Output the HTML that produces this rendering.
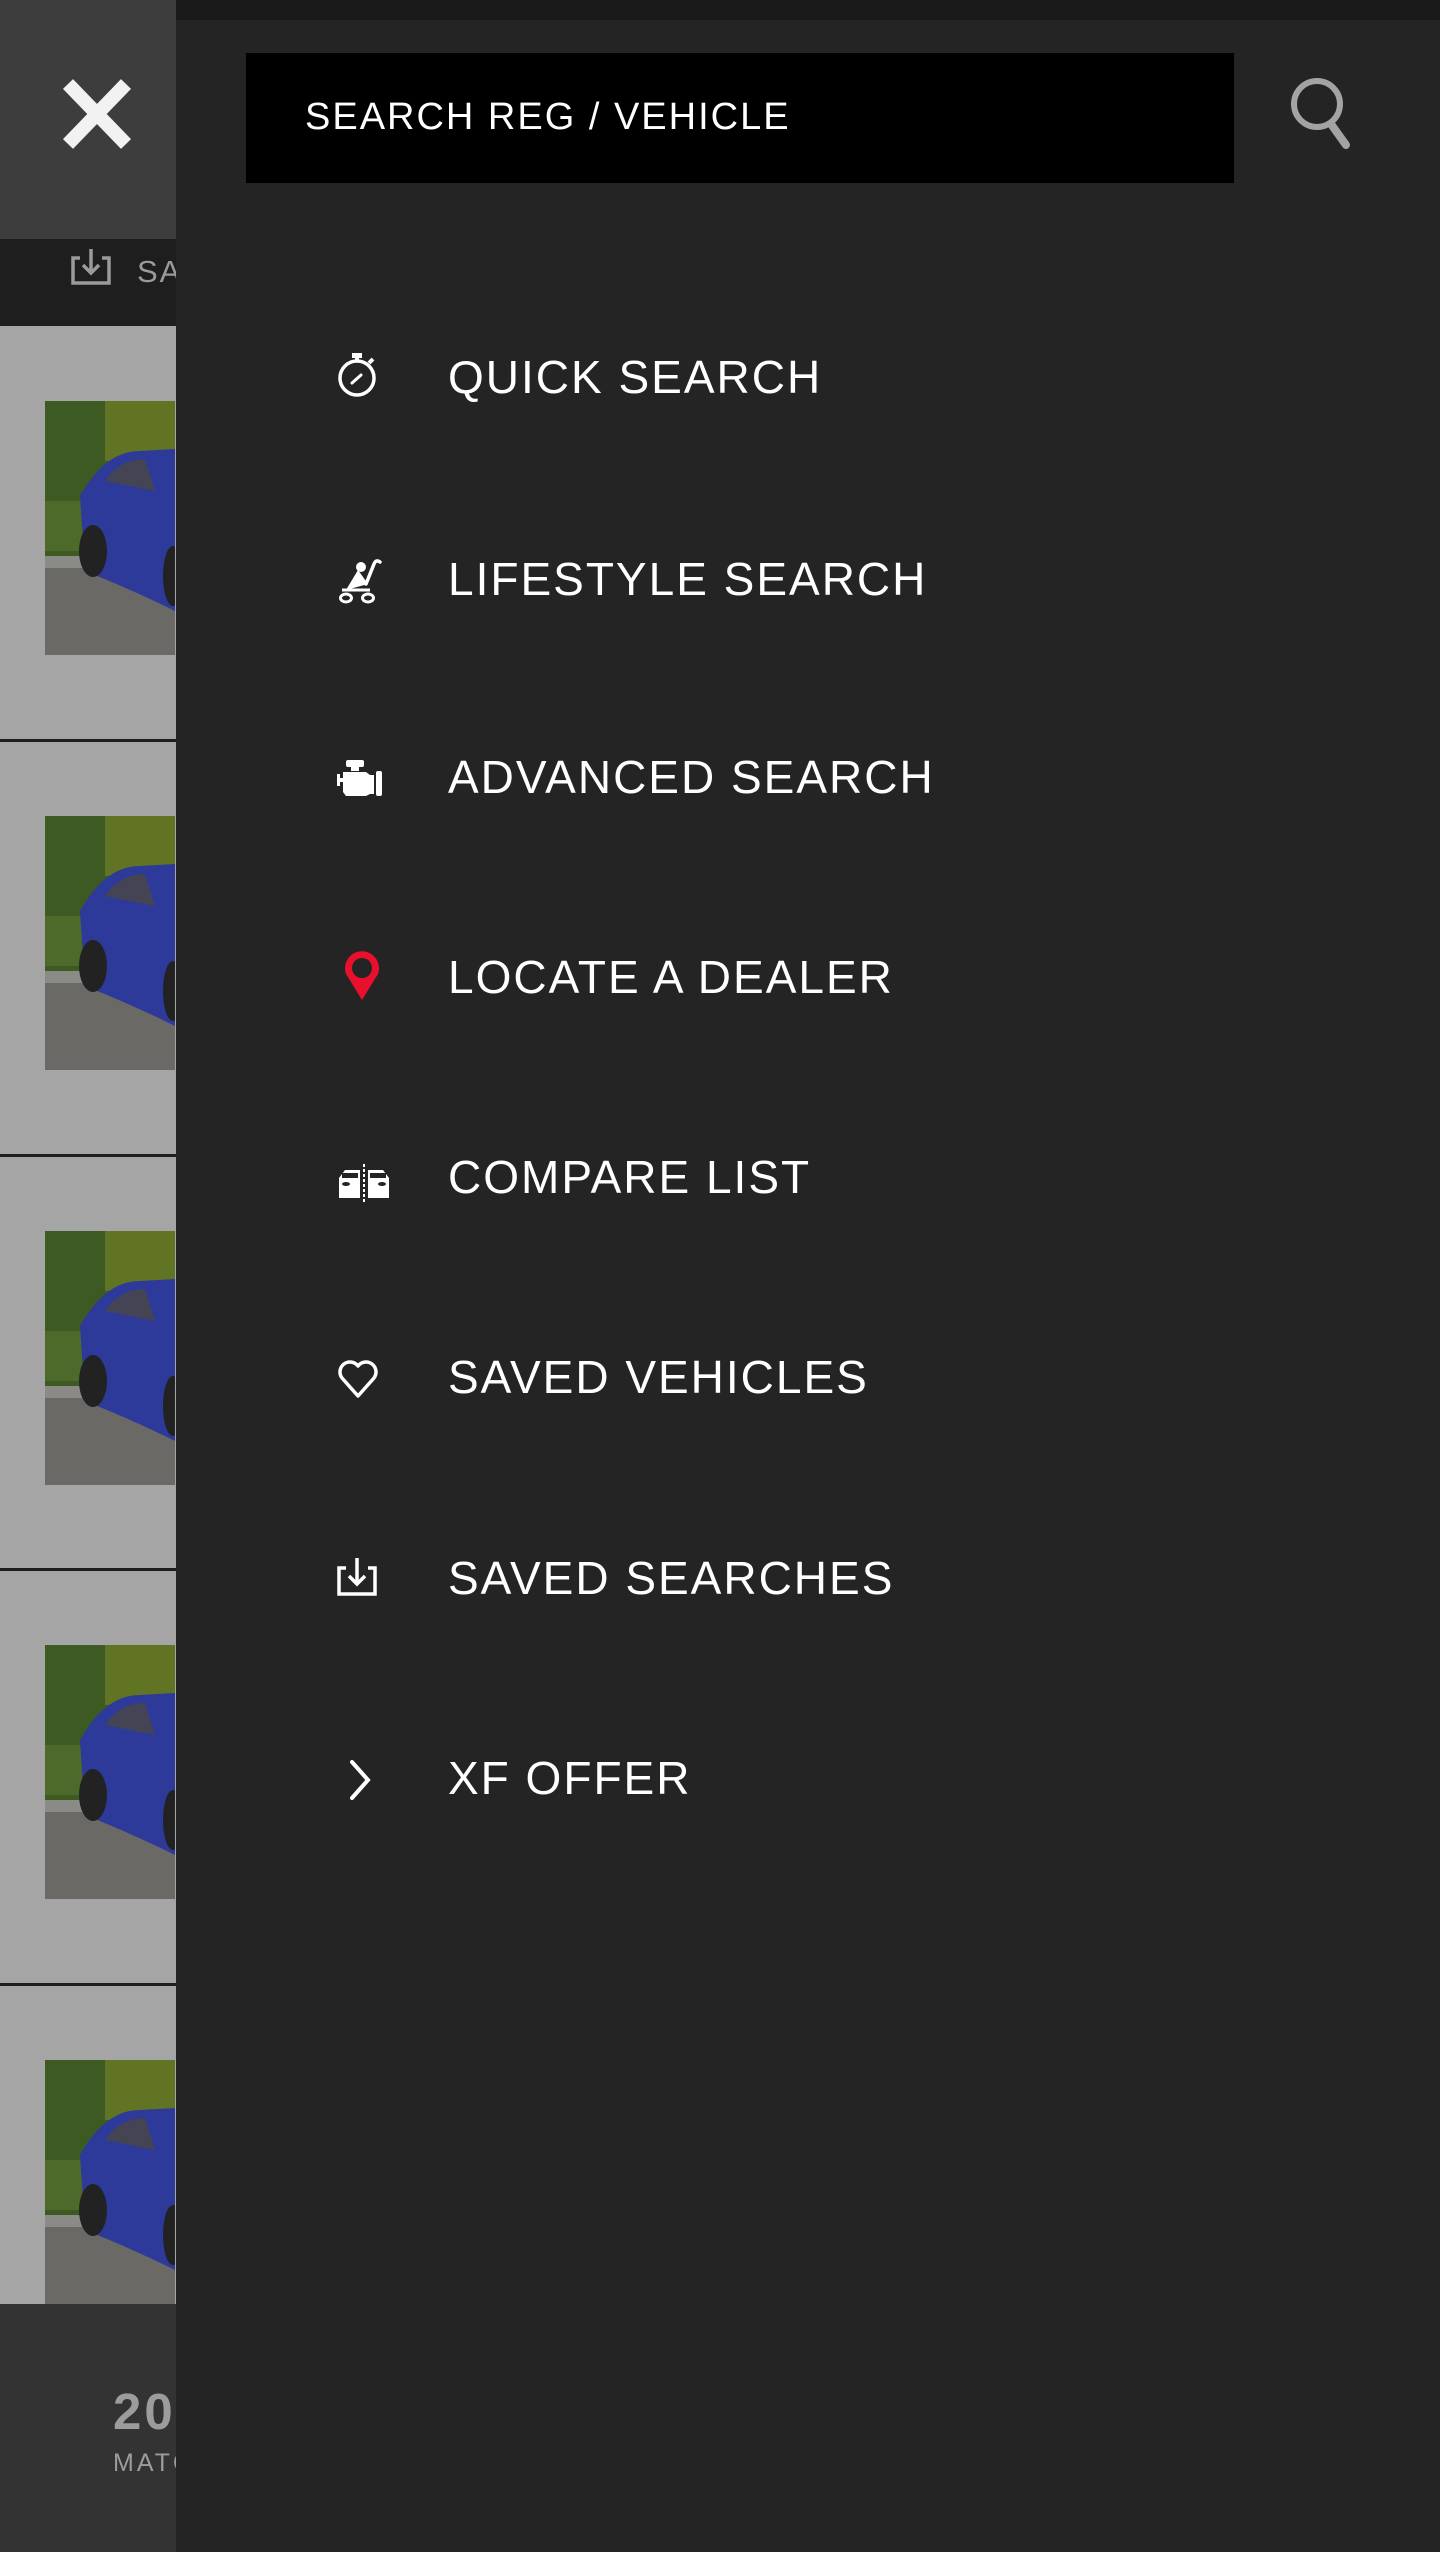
<!DOCTYPE html>
<html><head><meta charset="utf-8"><style>
*{margin:0;padding:0;box-sizing:border-box}
body{width:1440px;height:2552px;background:#242424;position:relative;overflow:hidden;font-family:"Liberation Sans",sans-serif}
.abs{position:absolute}
.item{position:absolute;left:448px;font-size:46px;letter-spacing:2px;color:#fff;line-height:46px;white-space:nowrap}
.ic{position:absolute}
</style></head><body>
<!-- left strip -->
<div class="abs" style="left:0;top:0;width:178px;height:239px;background:#3d3d3d"></div>
<svg class="abs" style="left:60px;top:78px" width="74" height="72" viewBox="0 0 74 72"><path d="M8 6 L66 66 M66 6 L8 66" stroke="#f2f2f2" stroke-width="14"/></svg>
<div class="abs" style="left:0;top:239px;width:176px;height:87px;background:#1e1e1e"></div>
<svg class="abs" style="left:70px;top:246px" width="42" height="40" viewBox="0 0 42 40"><path d="M10 12 H3 V37 H39 V12 H32 M21 3 V27 M13 19 L21 27 L29 19" fill="none" stroke="#9a9a9a" stroke-width="3.5"/></svg>
<div class="abs" style="left:137px;top:254px;font-size:31px;color:#9a9a9a;letter-spacing:2px">SA</div>
<div class="abs" style="left:0;top:326px;width:176px;height:1978px;background:#a5a5a5"></div>
<svg width="0" height="0" style="position:absolute"><defs>
<symbol id="car" viewBox="0 0 130 254">
<rect width="130" height="254" fill="#6b6965"/>
<rect width="130" height="160" fill="#3d5a22"/>
<rect x="60" y="0" width="70" height="60" fill="#6a7a25" opacity=".8"/>
<rect x="0" y="100" width="80" height="50" fill="#4e6a2a"/>
<rect x="0" y="155" width="80" height="12" fill="#8a8a86"/>
<path d="M35 95 Q60 50 95 50 L130 48 L130 210 Q90 190 40 170 Z" fill="#2d3a9a"/>
<path d="M60 80 Q75 58 100 58 L110 90 Z" fill="#445"/>
<ellipse cx="48" cy="150" rx="14" ry="26" fill="#222"/>
<ellipse cx="128" cy="175" rx="10" ry="30" fill="#222"/>
</symbol></defs></svg>
<svg class="abs" style="left:45px;top:401px" width="130" height="254"><use href="#car"/></svg>
<div class="abs" style="left:0;top:739px;width:176px;height:3px;background:#1e1e1e"></div>
<svg class="abs" style="left:45px;top:816px" width="130" height="254"><use href="#car"/></svg>
<div class="abs" style="left:0;top:1154px;width:176px;height:3px;background:#1e1e1e"></div>
<svg class="abs" style="left:45px;top:1231px" width="130" height="254"><use href="#car"/></svg>
<div class="abs" style="left:0;top:1568px;width:176px;height:3px;background:#1e1e1e"></div>
<svg class="abs" style="left:45px;top:1645px" width="130" height="254"><use href="#car"/></svg>
<div class="abs" style="left:0;top:1983px;width:176px;height:3px;background:#1e1e1e"></div>
<div class="abs" style="left:45px;top:2060px;width:130px;height:244px;overflow:hidden"><svg width="130" height="254"><use href="#car"/></svg></div>
<div class="abs" style="left:0;top:2304px;width:176px;height:248px;background:#333"></div>
<div class="abs" style="left:113px;top:2382px;font-size:51px;font-weight:bold;color:#9c9c9c;letter-spacing:3px">20</div>
<div class="abs" style="left:113px;top:2449px;font-size:25px;color:#9c9c9c;letter-spacing:3px">MATC</div>

<!-- panel -->
<div class="abs" style="left:176px;top:0;width:1264px;height:2552px;background:#242424"></div>
<div class="abs" style="left:176px;top:0;width:1264px;height:20px;background:#1a1a1a"></div>
<div class="abs" style="left:246px;top:53px;width:988px;height:130px;background:#000"></div>
<div class="abs" style="left:305px;top:97px;font-size:38px;letter-spacing:2px;color:#fff;line-height:40px">SEARCH REG / VEHICLE</div>
<svg class="abs" style="left:1285px;top:72px" width="70" height="84" viewBox="0 0 70 84"><circle cx="32" cy="32" r="23" fill="none" stroke="#a3a3a3" stroke-width="6"/><path d="M46 52 L61 73" stroke="#a3a3a3" stroke-width="8" stroke-linecap="round"/></svg>

<!-- menu -->
<svg class="ic" style="left:336px;top:350px" width="46" height="50" viewBox="0 0 46 50"><circle cx="21" cy="28" r="17" fill="none" stroke="#fff" stroke-width="3.5"/><rect x="16" y="3" width="10" height="5" fill="#fff"/><rect x="19" y="7" width="4" height="5" fill="#fff"/><path d="M33 13 L37 9" stroke="#fff" stroke-width="4"/><path d="M16 33 L25 25" stroke="#fff" stroke-width="3" stroke-linecap="round"/></svg>
<div class="item" style="top:354px">QUICK SEARCH</div>

<svg class="ic" style="left:336px;top:556px" width="46" height="50" viewBox="0 0 46 50"><path d="M10 34 L22 14 L32 28 Z" fill="#fff"/><circle cx="25" cy="11" r="5" fill="#fff"/><path d="M30 28 L38 8 Q40 3 44 6" fill="none" stroke="#fff" stroke-width="3.5" stroke-linecap="round"/><path d="M6 34 L34 34" stroke="#fff" stroke-width="3"/><ellipse cx="10" cy="42" rx="5.5" ry="4" fill="none" stroke="#fff" stroke-width="3"/><ellipse cx="32" cy="42" rx="5.5" ry="4" fill="none" stroke="#fff" stroke-width="3"/></svg>
<div class="item" style="top:556px">LIFESTYLE SEARCH</div>

<svg class="ic" style="left:336px;top:758px" width="48" height="42" viewBox="0 0 48 42"><rect x="10" y="2" width="18" height="7" rx="2" fill="#fff"/><rect x="15" y="8" width="8" height="5" fill="#fff"/><path d="M8 14 H30 L34 17 H38 V36 H34 L30 38 H10 L7 34 V14 Z" fill="#fff"/><rect x="1" y="20" width="8" height="4" fill="#fff"/><rect x="1" y="16" width="3" height="12" fill="#fff"/><rect x="40" y="13" width="6" height="25" rx="2" fill="#fff"/></svg>
<div class="item" style="top:754px">ADVANCED SEARCH</div>

<svg class="ic" style="left:340px;top:950px" width="44" height="54" viewBox="0 0 44 54"><path d="M22 50 L6 24 A17 17 0 1 1 38 24 Z" fill="#e8102c"/><circle cx="22" cy="18" r="10" fill="#242424"/></svg>
<div class="item" style="top:954px">LOCATE A DEALER</div>

<svg class="ic" style="left:336px;top:1162px" width="56" height="40" viewBox="0 0 56 40"><path d="M3 16 L9 8 H24 V36 H3 Z" fill="#fff"/><path d="M53 16 L47 8 H32 V36 H53 Z" fill="#fff"/><rect x="6" y="11" width="16" height="5" fill="#242424"/><rect x="34" y="11" width="16" height="5" fill="#242424"/><ellipse cx="10" cy="22" rx="4" ry="2" fill="#242424"/><ellipse cx="46" cy="22" rx="4" ry="2" fill="#242424"/><rect x="26" y="2" width="4" height="38" fill="#242424"/><path d="M28 2 V40" stroke="#fff" stroke-width="2" stroke-dasharray="3 2"/></svg>
<div class="item" style="top:1154px">COMPARE LIST</div>

<svg class="ic" style="left:336px;top:1358px" width="46" height="42" viewBox="0 0 46 42"><path d="M22 38 L6 20 A9 9 0 0 1 22 8 A9 9 0 0 1 38 20 Z" fill="none" stroke="#fff" stroke-width="3.5" stroke-linejoin="round"/></svg>
<div class="item" style="top:1354px">SAVED VEHICLES</div>

<svg class="ic" style="left:336px;top:1556px" width="46" height="42" viewBox="0 0 46 42"><path d="M10 12 H3 V38 H39 V12 H32 M21 2 V28 M13 20 L21 28 L29 20" fill="none" stroke="#fff" stroke-width="3.5"/></svg>
<div class="item" style="top:1555px">SAVED SEARCHES</div>

<svg class="ic" style="left:346px;top:1758px" width="30" height="44" viewBox="0 0 30 44"><path d="M6 4 L22 22 L6 40" fill="none" stroke="#fff" stroke-width="4" stroke-linecap="round"/></svg>
<div class="item" style="top:1755px">XF OFFER</div>
</body></html>
